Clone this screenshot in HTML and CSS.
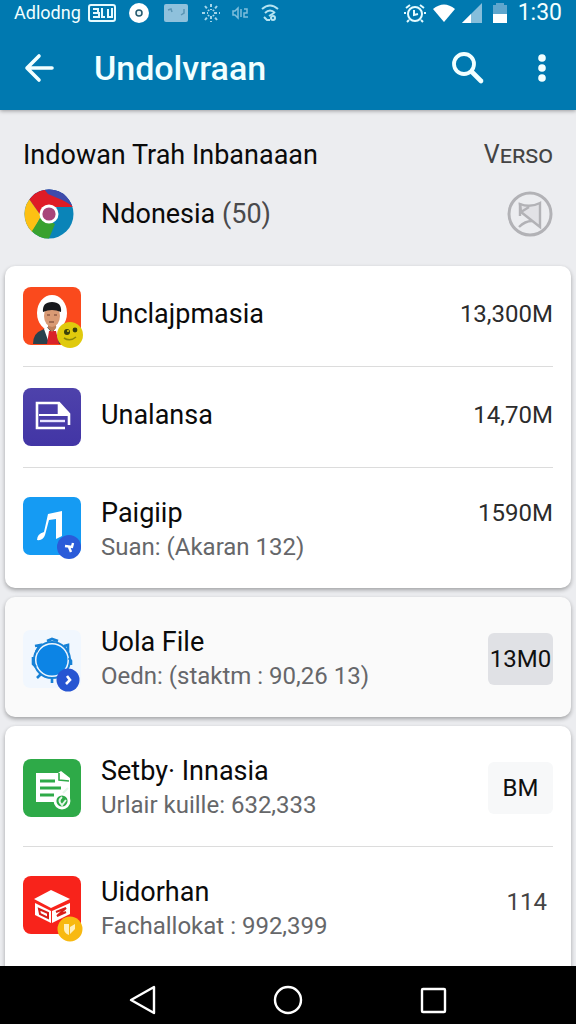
FILE: index.html
```html
<!DOCTYPE html>
<html lang="id">
<head>
<meta charset="utf-8">
<meta name="viewport" content="width=device-width, initial-scale=1">
<title>Undolvraan</title>
<link rel="stylesheet" href="styles.css">
</head>
<body>
<header class="appbar">
  <div class="status">
    <span class="carrier">Adlodng</span>
    <div class="status-left">
      <svg width="28" height="20" viewBox="0 0 28 20" fill="none" stroke="#e6fbff" stroke-width="2"><rect x="1" y="2" width="26" height="16" rx="2"/><path d="M5 6h5v4H5M5 14h6V9M14 5v9h3M20 6v8h4V5" /></svg>
      <svg width="22" height="22" viewBox="0 0 22 22"><circle cx="11" cy="11" r="10" fill="#fff"/><circle cx="11" cy="11" r="3" fill="#e8f6fa" stroke="#23586d" stroke-width="1.5"/></svg>
      <svg class="gap-wide" width="24" height="18" viewBox="0 0 24 18"><rect width="24" height="18" rx="2" fill="#8fc1dc"/><path d="M4 6l3-1 1 3M17 11l3-2V5" fill="none" stroke="#5a95b4" stroke-width="1.5"/></svg>
      <svg class="gap-wide" width="18" height="18" viewBox="0 0 18 18" fill="none" stroke="#a4d6ea" stroke-width="2" stroke-dasharray="3 2"><path d="M9 0v6M9 12v6M0 9h6M12 9h6M3 2l4 5M15 2l-4 5M3 16l4-5M15 16l-4-5"/></svg>
      <svg width="17" height="14" viewBox="0 0 17 14" fill="none" stroke="#7fbfdc" stroke-width="1.5"><path d="M1 5v4h2l3 3V2L3 5zM9 3v8M12 3h3v4h-3v4h4"/></svg>
      <svg width="18" height="18" viewBox="0 0 18 18" fill="none" stroke="#b5e4f2" stroke-width="2"><path d="M1 5q8-7 16 0M4 9q5-5 10 0M8 12l5-3M3 13l3 3h3"/><circle cx="12" cy="14" r="2"/></svg>
    </div>
    <div class="status-right">
      <svg width="22" height="20" viewBox="0 0 22 20" fill="none" stroke="#e4fbff" stroke-width="2"><circle cx="11" cy="11" r="7"/><path d="M10 7v5l4-1M2 5l4-3M20 5l-4-3M2 10H0M22 10h-2M5 17l-2 2M17 17l2 2"/></svg>
      <svg width="24" height="20" viewBox="0 0 24 20"><path d="M1 6Q12-3 23 6L12 19z" fill="#fff"/></svg>
      <svg width="20" height="20" viewBox="0 0 20 20"><path d="M0 20L20 0v20z" fill="#86bedb"/><path d="M0 20l9-9v9z" fill="#fff"/></svg>
      <svg class="gap-small" width="16" height="20" viewBox="0 0 16 20"><path d="M4 0h8v2h3v10H1V2h3z" fill="#5fa6cd"/><path d="M1 11h14v9H1z" fill="#fff"/></svg>
      <time class="clock">1:30</time>
    </div>
  </div>
  <div class="toolbar">
    <button class="tool" aria-label="Kembali"><svg width="30" height="28" viewBox="0 0 30 28" fill="none" stroke="#f2ffff" stroke-width="3.6" stroke-linecap="round" stroke-linejoin="round"><path d="M15 2L3 14l12 12M3 14h25"/></svg></button>
    <h1 class="title">Undolvraan</h1>
    <button class="tool" aria-label="Cari"><svg width="32" height="32" viewBox="0 0 32 32" fill="none" stroke="#f2ffff" stroke-linecap="round"><circle cx="12" cy="12" r="10" stroke-width="3.8"/><path d="M20 20l9 9" stroke-width="4.6"/></svg></button>
    <button class="tool more" aria-label="Menu"><svg width="8" height="28" viewBox="0 0 8 28" fill="#f2ffff"><circle cx="4" cy="4" r="3.8"/><circle cx="4" cy="14" r="3.8"/><circle cx="4" cy="24" r="3.8"/></svg></button>
  </div>
</header>

<main class="content">
  <section class="summary">
    <div class="summary-head">
      <h2 class="heading">Indowan Trah Inbanaaan</h2>
      <span class="version">Verso</span>
    </div>
    <div class="summary-row">
      <svg class="chrome" viewBox="0 0 50 50"><defs><clipPath id="disc"><circle cx="25" cy="25" r="24.5"/></clipPath></defs><g clip-path="url(#disc)"><path d="M0 0h50v50H0z" fill="#0a84b8"/><path d="M5 10L15 0h35v18H25z" fill="#3f4bab"/><path d="M5 10L17-2l9 5 24 15H27l-10 9z" fill="#df1c26"/><path d="M20 0h30v16L24 5z" fill="#3f4bab"/><path d="M5 10L17 27 8 44-6 44V8z" fill="#fdc013"/><path d="M17 28L8 42l6 10 10 0 7-17z" fill="#38a12f"/></g><circle cx="25" cy="25" r="9.5" fill="#fff"/><circle cx="25" cy="25" r="6.6" fill="#a8457a"/></svg>
      <p class="name">Ndonesia <span class="count">(50)</span></p>
      <svg class="seal" viewBox="0 0 46 46" fill="none" stroke="#b2b2b6"><circle cx="23" cy="23" r="21" stroke-width="3"/><path d="M13 13q10 4 20-1v24L14 21z" fill="#e2e2e6" stroke-width="2.4"/><path d="M13 12v13M12 36q6-6 13-6M14 21l8-5" stroke-width="2.4"/></svg>
    </div>
  </section>

  <ul class="card">
    <li class="row">
      <svg class="icon" viewBox="0 0 58 58"><rect width="58" height="58" rx="8" fill="#fa4a1d"/><ellipse cx="29" cy="26" rx="15" ry="18" fill="#fff"/><path d="M10 57q0-11 9-14l8-4h5l7 4q9 3 9 14z" fill="#29414d"/><path d="M23 39l6 7 5-7 4 3-6 14h-6l-5-14z" fill="#fff"/><path d="M26 44h7l3 13H24z" fill="#d92329"/><path d="M25 35h8v6l-4 4-4-4z" fill="#bd7e59"/><ellipse cx="29" cy="29" rx="8" ry="11" fill="#d99a74"/><path d="M20 25q-1-10 9-10t9 10q-9-4-18 0z" fill="#17191d"/><path d="M24 28h3M31 28h3M26 35h5" stroke="#6b3b2d" stroke-width="1.2"/><g><circle cx="47" cy="48" r="13" fill="#e0ca0d"/><circle cx="44" cy="45" r="3" fill="#38400b"/><circle cx="52" cy="43" r="2.4" fill="#38400b"/><path d="M41 51q6 4 12-1" fill="none" stroke="#898609" stroke-width="1.6"/><circle cx="45" cy="44" r="1" fill="#e0ca0d"/></g></svg>
      <h3 class="name">Unclajpmasia</h3>
      <span class="amount">13,300M</span>
    </li>
    <li class="row">
      <svg class="icon" viewBox="0 0 58 58"><defs><linearGradient id="violet" x2="0" y2="1"><stop stop-color="#4e42ab"/><stop offset="1" stop-color="#4235a5"/></linearGradient></defs><rect width="58" height="58" rx="8" fill="url(#violet)"/><path d="M42 40H14V15h22l10 11v11M36 15v10h10" fill="none" stroke="#fff" stroke-width="2.6"/><path d="M16 27h29" stroke="#fff" stroke-width="2"/><path d="M17 33h25" stroke="#e8e5ff" stroke-width="2.4"/><path d="M35 14l12 12H35z" fill="#fff"/></svg>
      <h3 class="name">Unalansa</h3>
      <span class="amount">14,70M</span>
    </li>
    <li class="row tall">
      <svg class="icon raised" viewBox="0 0 58 58"><rect width="58" height="58" rx="7" fill="#159bf3"/><path d="M25 17l14-3v25l-6 3V22l-7 1-4 15q-2 6-8 5 0-6 7-8z" fill="#fff"/><circle cx="46" cy="50" r="12" fill="#2a5bd9"/><path d="M42 49l7 1 1-4M46 50l2 5" fill="none" stroke="#fff" stroke-width="2.4"/></svg>
      <div class="text"><h3 class="name">Paigiip</h3><p class="detail">Suan: (Akaran 132)</p></div>
      <span class="amount top">1590M</span>
    </li>
  </ul>

  <ul class="card muted">
    <li class="row tall">
      <svg class="icon" viewBox="0 0 58 58"><rect width="58" height="58" rx="7" fill="#f1f7fe"/><circle cx="29" cy="30" r="18" fill="none" stroke="#1681d6" stroke-width="2"/><path d="M24 11l5-2 6 2M41 16l4-1v7M12 16l5-1-4 7M10 27v7l3 3M46 28l2 3v4M18 44l-4 4M29 49v4" fill="none" stroke="#1681d6" stroke-width="2.6"/><circle cx="29" cy="30" r="15.5" fill="#0c84e5"/><circle cx="45" cy="50" r="11.5" fill="#2655d2"/><path d="M44 46l3 4-4 4" fill="none" stroke="#fff" stroke-width="2.6"/></svg>
      <div class="text"><h3 class="name">Uola File</h3><p class="detail">Oedn: (staktm : 90,26 13)</p></div>
      <span class="amount chip">13M0</span>
    </li>
  </ul>

  <ul class="card last">
    <li class="row tall">
      <svg class="icon" viewBox="0 0 58 58"><rect width="58" height="58" rx="8" fill="#2eaa48"/><path d="M13 14h22l3-2 9 7v24H13z" fill="#fff"/><path d="M17 22h15M17 29h21M17 36h14" stroke="#2eaa48" stroke-width="2.8"/><path d="M36 14v7l10 1" fill="none" stroke="#2eaa48" stroke-width="1.6"/><circle cx="39" cy="42" r="7" fill="#2eaa48" stroke="#fff" stroke-width="2.8"/><path d="M40 34l5-5M39 38q-5 4 0 8l4-5" fill="none" stroke="#e4f7e8" stroke-width="2"/></svg>
      <div class="text"><h3 class="name">Setby· Innasia</h3><p class="detail">Urlair kuille: 632,333</p></div>
      <span class="amount chip faint">BM</span>
    </li>
    <li class="row tall">
      <svg class="icon raised" viewBox="0 0 58 58"><rect width="58" height="58" rx="8" fill="#f8231b"/><path d="M11 23l17-9 19 9-19 9z" fill="#fff"/><path d="M12 27l16 8v12l-16-8zM29 35l18-8v11l-18 9z" fill="#fff"/><path d="M16 33l9 4v5l-8-4zM33 36l10-4-9 8 9-4" fill="none" stroke="#d91d19" stroke-width="2"/><circle cx="47" cy="53" r="12.5" fill="#f8b911"/><path d="M41 48h5v11q-5-2-5-6zM47 51l5-3v5l-5 5z" fill="#fff0bd"/></svg>
      <div class="text"><h3 class="name">Uidorhan</h3><p class="detail">Fachallokat : 992,399</p></div>
      <span class="amount inset">114</span>
    </li>
  </ul>
</main>

<nav class="navbar" aria-label="Sistem">
  <button class="navkey" aria-label="Kembali"><svg width="30" height="30" viewBox="0 0 30 30" fill="none" stroke="#fff" stroke-width="2.4" stroke-linejoin="round"><path d="M26 2v26L3 15z"/></svg></button>
  <button class="navkey" aria-label="Beranda"><svg width="30" height="30" viewBox="0 0 30 30" fill="none" stroke="#fff" stroke-width="2.4"><circle cx="15" cy="15" r="13"/></svg></button>
  <button class="navkey" aria-label="Terkini"><svg width="30" height="30" viewBox="0 0 30 30" fill="none" stroke="#fff" stroke-width="2.4"><rect x="4" y="4" width="23" height="23" rx="1"/></svg></button>
</nav>
</body>
</html>
```
FILE: styles.css
```css
* { box-sizing: border-box; }

body {
  margin: 0;
  height: 100vh;
  display: flex;
  flex-direction: column;
  overflow: hidden;
  background: #ecedf0;
  color: #0a0a0a;
  font-family: Roboto, "Liberation Sans", sans-serif;
}

h1, h2, h3, p, ul { margin: 0; padding: 0; font-weight: 400; }
svg { display: block; flex: none; overflow: visible; }
button { border: 0; padding: 0; background: none; cursor: pointer; }

.appbar {
  flex: none;
  background: #0079b0;
  color: #f2ffff;
  box-shadow: 0 1px 4px rgba(0, 0, 0, 0.35);
  z-index: 1;
}

.status {
  height: 26px;
  padding: 0 14px;
  display: flex;
  align-items: center;
}
.carrier { font-size: 18px; line-height: 26px; width: 74px; }
.status-left { display: flex; align-items: center; gap: 12px; }
.gap-wide { margin-left: 2px; }
.status-right { display: flex; align-items: center; gap: 6px; margin-left: auto; }
.gap-small { margin-left: 4px; }
.clock { font-size: 23px; line-height: 26px; margin-left: 4px; }

.toolbar {
  height: 84px;
  padding: 0 30px 0 24px;
  display: flex;
  align-items: center;
}
.title { flex: 1; margin-left: 40px; font-size: 34px; line-height: 40px; font-weight: 500; }
.more { margin-left: 54px; }

.content {
  flex: 1;
  min-height: 0;
  overflow: hidden;
  padding: 0 5px;
  display: flex;
  flex-direction: column;
  gap: 9px;
}

.summary { flex: none; padding: 28px 18px 18px; }
.summary-head, .summary-row { display: flex; align-items: center; justify-content: space-between; }
.heading { font-size: 27px; line-height: 34px; }
.version { font-size: 25px; line-height: 34px; font-variant: small-caps; color: #444; }
.summary-row { height: 50px; margin-top: 17px; gap: 26px; }
.summary-row .name { flex: 1; }
.chrome { width: 52px; height: 50px; }
.count { color: #4a4a4c; }
.seal { width: 46px; height: 46px; }

.card {
  flex: none;
  list-style: none;
  padding: 0 18px;
  border-radius: 10px;
  background: #fff;
  box-shadow: 0 2px 4px rgba(0, 0, 0, 0.32);
}
.muted { background: #fafafa; }
.last { border-radius: 10px 10px 0 0; }

.row { display: flex; align-items: center; gap: 20px; padding: 21px 0; }
.row + .row { border-top: 1px solid #dcdcdc; }
.tall { padding: 28px 0 24px; }
.icon { width: 58px; height: 58px; }
.raised { margin-bottom: 8px; }
.text, .row > .name { flex: 1; min-width: 0; }
.row > .name, .row > .name + .amount { padding-bottom: 4px; }

.name { font-size: 27px; line-height: 34px; white-space: nowrap; }
.detail { font-size: 24px; line-height: 34px; color: #66676a; white-space: nowrap; }
.amount { font-size: 24px; line-height: 34px; color: #2c2c2c; }
.top { align-self: flex-start; }
.chip {
  min-width: 65px;
  padding: 9px 1px;
  border-radius: 6px;
  background: #e0e1e5;
  color: #101010;
  text-align: center;
}
.faint { background: #f7f8f9; }
.inset { padding: 0 6px 14px 0; color: #444; }

.navbar {
  flex: none;
  height: 58px;
  padding: 10px 71px 0;
  background: #000;
  display: flex;
  z-index: 1;
}
.navkey { flex: 1; height: 48px; display: flex; justify-content: center; align-items: center; }
```
